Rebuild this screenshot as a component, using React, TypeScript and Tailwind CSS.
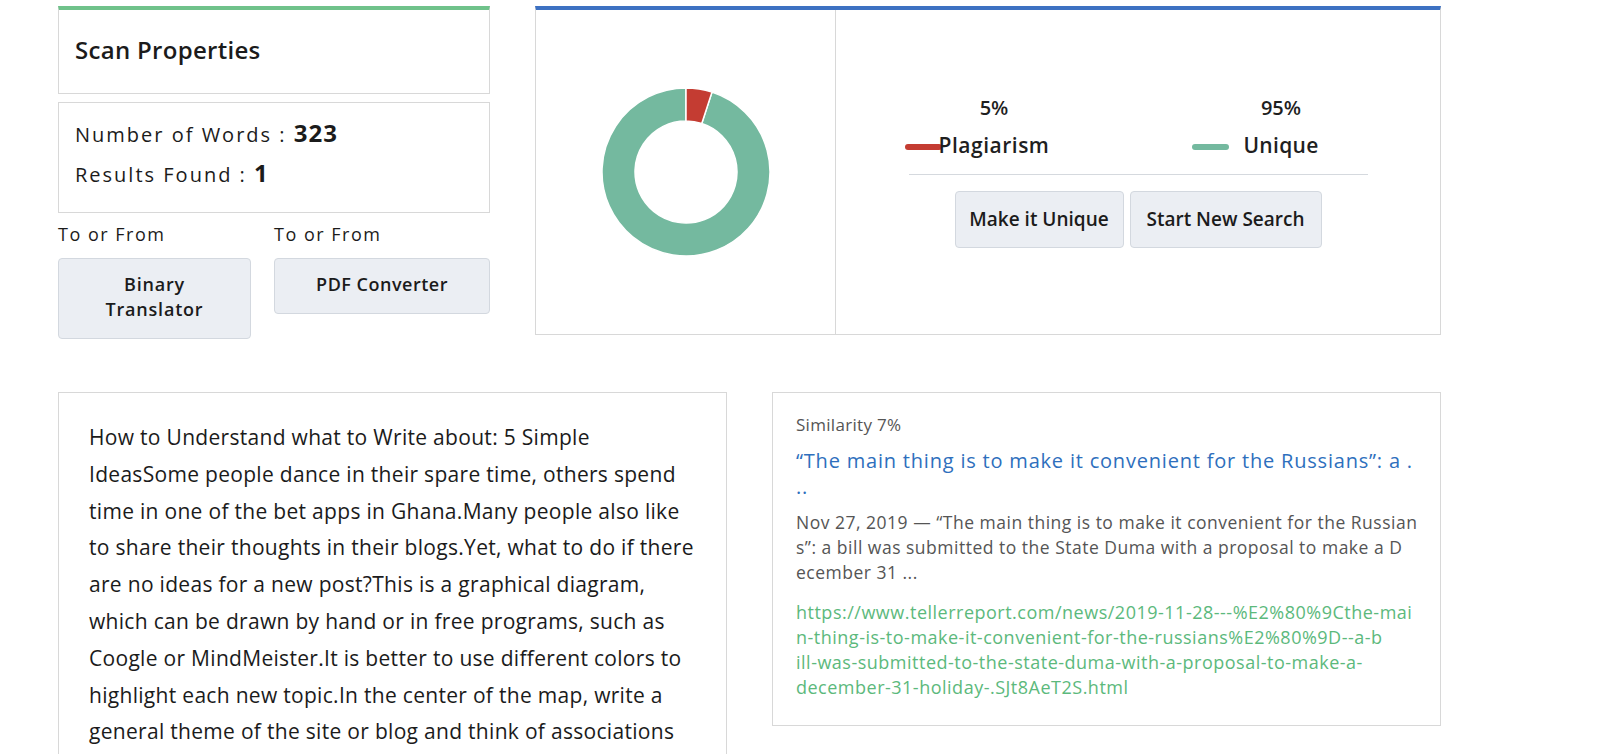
import React from "react";

const font = { fontFamily: '"Open Sans", "Liberation Sans", sans-serif' };

function arcPath(cx: number, cy: number, ro: number, ri: number, a0: number, a1: number) {
  const p = (r: number, a: number) => {
    const rad = ((a - 90) * Math.PI) / 180;
    return [cx + r * Math.cos(rad), cy + r * Math.sin(rad)];
  };
  const large = a1 - a0 > 180 ? 1 : 0;
  const [x0, y0] = p(ro, a0);
  const [x1, y1] = p(ro, a1);
  const [x2, y2] = p(ri, a1);
  const [x3, y3] = p(ri, a0);
  return `M${x0} ${y0} A${ro} ${ro} 0 ${large} 1 ${x1} ${y1} L${x2} ${y2} A${ri} ${ri} 0 ${large} 0 ${x3} ${y3} Z`;
}

function Donut() {
  const c = 86;
  return (
    <svg width="172" height="172" viewBox="0 0 172 172">
      <path d={arcPath(c, c, 84, 51, 18, 359.99)} fill="#74b99f" stroke="#ffffff" strokeWidth="1.5" />
      <path d={arcPath(c, c, 84, 51, 0, 18)} fill="#c43c32" stroke="#ffffff" strokeWidth="1.5" />
    </svg>
  );
}

const bodyLines = [
  "How to Understand what to Write about: 5 Simple",
  "IdeasSome people dance in their spare time, others spend",
  "time in one of the bet apps in Ghana.Many people also like",
  "to share their thoughts in their blogs.Yet, what to do if there",
  "are no ideas for a new post?This is a graphical diagram,",
  "which can be drawn by hand or in free programs, such as",
  "Coogle or MindMeister.It is better to use different colors to",
  "highlight each new topic.In the center of the map, write a",
  "general theme of the site or blog and think of associations",
];

const descLines = [
  "Nov 27, 2019 — “The main thing is to make it convenient for the Russian",
  "s”: a bill was submitted to the State Duma with a proposal to make a D",
  "ecember 31 ...",
];

const urlLines = [
  "https://www.tellerreport.com/news/2019-11-28---%E2%80%9Cthe-mai",
  "n-thing-is-to-make-it-convenient-for-the-russians%E2%80%9D--a-b",
  "ill-was-submitted-to-the-state-duma-with-a-proposal-to-make-a-",
  "december-31-holiday-.SJt8AeT2S.html",
];

export default function App() {
  return (
    <div className="h-[754px] w-[1600px] overflow-hidden bg-white pl-[58px] pt-[6px] text-[#1f1f1f]" style={font}>
      {/* Top row */}
      <div className="flex items-start gap-[45px]">
        {/* Left column */}
        <div className="flex w-[432px] flex-col">
          <div className="h-[88px] border border-t-4 border-[#d8d8d8] border-t-[#6fc28a] pl-[16px] pt-[24px]">
            <div className="text-[24px] font-semibold leading-[32px] tracking-[0.3px] text-[#1b1b1b]">Scan Properties</div>
          </div>
          <div className="mt-[8px] h-[111px] border border-[#d8d8d8] pl-[16px] pt-[14px]">
            <div className="text-[20px] leading-[32px] tracking-[2px] text-[#1b1b1b]">
              Number of Words : <span className="text-[24px] font-bold tracking-[1px]">323</span>
            </div>
            <div className="mt-[6px] text-[20px] leading-[32px] tracking-[2px] text-[#1b1b1b]">
              Results Found : <span className="text-[24px] font-bold">1</span>
            </div>
          </div>
          <div className="mt-[8px] flex gap-[23px]">
            <div className="flex w-[193px] flex-col">
              <div className="text-[18px] leading-[26px] tracking-[1.5px] text-[#1b1b1b]">To or From</div>
              <div className="mt-[11px] h-[81px] rounded-[4px] border border-[#d3d8df] bg-[#ebeef3] pt-[13px] text-center text-[18px] font-semibold leading-[25px] tracking-[0.8px] text-[#1b1b1b]">
                Binary
                <br />
                Translator
              </div>
            </div>
            <div className="flex w-[216px] flex-col">
              <div className="text-[18px] leading-[26px] tracking-[1.5px] text-[#1b1b1b]">To or From</div>
              <div className="mt-[11px] h-[56px] rounded-[4px] border border-[#d3d8df] bg-[#ebeef3] pt-[13px] text-center text-[18px] font-semibold leading-[25px] tracking-[0.5px] text-[#1b1b1b]">
                PDF Converter
              </div>
            </div>
          </div>
        </div>

        {/* Right result box */}
        <div className="flex h-[329px] w-[906px] border border-t-4 border-[#d8d8d8] border-t-[#3d71c2]">
          <div className="flex w-[300px] items-center justify-center border-r border-[#d8d8d8]">
            <Donut />
          </div>
          <div className="flex flex-1 flex-col">
            <div className="mt-[84px] flex items-end">
              <div className="ml-[69px] mb-[9px] h-[6px] w-[37px] rounded-full bg-[#c43c32]" />
              <div className="-ml-[4px] flex w-[112px] flex-col items-center">
                <div className="text-[20px] font-semibold leading-[28px]">5%</div>
                <div className="mt-[9px] whitespace-nowrap text-[21px] font-semibold leading-[28px] tracking-[0.5px]">Plagiarism</div>
              </div>
              <div className="ml-[142px] mb-[9px] h-[6px] w-[37px] rounded-full bg-[#74b99f]" />
              <div className="ml-[15px] flex w-[74px] flex-col items-center">
                <div className="text-[20px] font-semibold leading-[28px]">95%</div>
                <div className="mt-[9px] text-[21px] font-semibold leading-[28px] tracking-[0.3px]">Unique</div>
              </div>
            </div>
            <div className="mx-auto mt-[15px] h-px w-[459px] bg-[#d5d9de]" />
            <div className="mt-[16px] flex justify-center gap-[6px]">
              <div className="flex h-[57px] w-[169px] items-center justify-center rounded-[4px] border border-[#d3d8df] bg-[#ebeef3] text-[19px] font-semibold text-[#1b1b1b]">
                Make it Unique
              </div>
              <div className="flex h-[57px] w-[192px] items-center justify-center rounded-[4px] border border-[#d3d8df] bg-[#ebeef3] text-[19px] font-semibold text-[#1b1b1b]">
                Start New Search
              </div>
            </div>
          </div>
        </div>
      </div>

      {/* Bottom row */}
      <div className="mt-[53px] flex items-start gap-[45px]">
        <div className="h-[363px] w-[669px] overflow-hidden border border-b-0 border-[#d8d8d8] pl-[30px] pt-[26px]">
          {bodyLines.map((l, i) => (
            <div key={i} className="whitespace-nowrap text-[21px] leading-[36.8px] tracking-[0.3px] text-[#1b1b1b]">
              {l}
            </div>
          ))}
        </div>
        <div className="h-[334px] w-[669px] border border-[#d8d8d8] pl-[23px] pt-[20px]">
          <div className="text-[17px] leading-[24px] tracking-[0.3px] text-[#555555]">Similarity 7%</div>
          <div className="mt-[11px] text-[20px] leading-[26px] tracking-[0.8px] text-[#2e6fbd]">
            <div className="whitespace-nowrap">“The main thing is to make it convenient for the Russians”: a .</div>
            <div>..</div>
          </div>
          <div className="mt-[10px] text-[17.5px] leading-[25px] tracking-[0.5px] text-[#555555]">
            {descLines.map((l, i) => (
              <div key={i} className="whitespace-nowrap">{l}</div>
            ))}
          </div>
          <div className="mt-[15px] text-[18px] leading-[25px] tracking-[0.5px] text-[#5cb97c]">
            {urlLines.map((l, i) => (
              <div key={i} className="whitespace-nowrap">{l}</div>
            ))}
          </div>
        </div>
      </div>
    </div>
  );
}
